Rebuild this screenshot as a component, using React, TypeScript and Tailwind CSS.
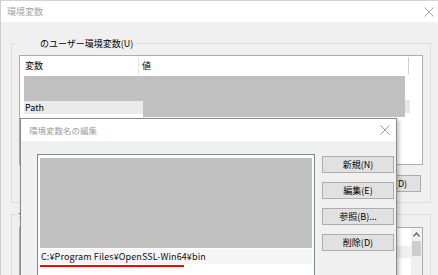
import React from "react";

const CloseX = ({ color = "#9a9a9a" }: { color?: string }) => (
  <svg width="10" height="10" viewBox="0 0 10 10" className="block">
    <path d="M0.5 0.5 L9.5 9.5 M9.5 0.5 L0.5 9.5" stroke={color} strokeWidth="1" fill="none" />
  </svg>
);

const Btn = ({ label, className = "" }: { label: string; className?: string }) => (
  <div
    className={`w-[72px] h-[17px] bg-[#e1e1e1] border border-[#adadad] flex items-center justify-center text-[9px] leading-none text-black ${className}`}
  >
    {label}
  </div>
);

const App = () => {
  return (
    <div className="relative w-[438px] h-[275px] overflow-hidden bg-[#f0f0f0] border-l border-[#cdcdcd] font-['Noto_Sans_CJK_JP',sans-serif] text-[9px] text-black">
      {/* 環境変数 (background window) */}
      <div className="flex flex-col">
        <div className="h-[22px] bg-white border-t border-[#d4d4d4] flex items-center justify-between pl-[6px] pr-[4px] text-[#a3a3a3]">
          <span className="text-[9px]">環境変数</span>
          <CloseX color="#a8a8a8" />
        </div>

        {/* user variables group */}
        <div className="relative ml-[10px] mt-[21px] w-[420px] h-[160px] border border-[#dcdcdc]">
          <div className="absolute left-[5px] top-[-7px] h-[13px] pl-[23px] pr-[3px] bg-[#f0f0f0] flex items-center text-[9px] leading-none">
            のユーザー環境変数(U)
          </div>

          <div className="ml-[7px] mt-[11px] w-[404px] h-[110px] bg-white border border-[#adadad] relative overflow-hidden">
            <div className="flex h-[19px] items-center">
              <div className="w-[119px] h-full pl-[5px] flex items-center border-r border-[#e5e5e5]">変数</div>
              <div className="pl-[3px]">値</div>
            </div>
            <div className="ml-[4px] mt-[1px] w-[381px] h-[25px] bg-[#c0c0c0]" />
            <div className="ml-[4px] flex h-[13px]">
              <div className="w-[119px] h-[13px] bg-[#ebebeb] pl-[1px] flex items-center text-[9px] leading-none">Path</div>
              <div className="relative z-[1] w-[262px] h-[16px] bg-[#c0c0c0]" />
            </div>
            {/* thin scrollbar */}
            <div className="absolute left-[388px] top-[1px] w-[1px] h-[17px] bg-[#cfcfcf]" />
            <div className="absolute left-[385px] top-[44px] w-[5px] h-[13px] bg-[#e6e6e6]" />
          </div>

          <div className="flex justify-end pr-[9px] mt-[10px]">
            <Btn label="削除(D)" className="pl-[14px]" />
          </div>
        </div>

        {/* system variables group */}
        <div className="relative ml-[10px] mt-[11px] w-[420px] h-[80px] border border-[#dcdcdc]">
          <div className="absolute left-[5px] top-[-7px] h-[13px] px-[1px] bg-[#f0f0f0] flex items-center text-[9px] leading-none">
            システム環境変数(S)
          </div>
          <div className="ml-[7px] mt-[12px] w-[404px] h-[70px] bg-white border border-[#adadad] flex">
            <div className="flex-1 pt-[18px]">
              <div className="h-[12px] bg-[#f0f0f0]" />
            </div>
            <div className="w-[11px] bg-[#f0f0f0] flex flex-col items-center pt-[4px]">
              <svg width="7" height="5" viewBox="0 0 7 5" className="block">
                <path d="M0.5 4.5 L3.5 1 L6.5 4.5" stroke="#606060" strokeWidth="1.2" fill="none" />
              </svg>
              <div className="mt-[4px] w-[9px] h-[15px] bg-[#cdcdcd]" />
            </div>
          </div>
        </div>
      </div>

      {/* 環境変数名の編集 (front dialog) */}
      <div className="absolute left-[19px] top-[118px] w-[377px] h-[175px] border border-[#8a8a8a] bg-[#f0f0f0] shadow-[2px_2px_4px_rgba(0,0,0,0.25)] flex flex-col">
        <div className="h-[22px] bg-white flex items-center justify-between pl-[8px] pr-[6px] text-[#a0a0a0] shrink-0">
          <span className="text-[8.5px]">環境変数名の編集</span>
          <CloseX color="#a0a0a0" />
        </div>
        <div className="flex pl-[16px] pt-[13px]">
          <div className="w-[278px] h-[140px] bg-white border border-[#828790] pl-[2px] pr-[2px] pt-[3px] flex flex-col">
            <div className="w-[272px] h-[90px] bg-[#c0c0c0]" />
            <div className="mt-[1px] w-[272px] h-[15px] bg-[#f5f5f5] pl-[1px] flex items-center text-[9px] leading-none text-[#111] tracking-[0.12px]">
              C:¥Program Files¥OpenSSL-Win64¥bin
            </div>
            <div className="mt-[1px] w-[144px] h-[2px] bg-[#ff0000]" />
          </div>
          <div className="ml-[7px] mt-[2px] flex flex-col gap-[9px]">
            <Btn label="新規(N)" />
            <Btn label="編集(E)" />
            <Btn label="参照(B)..." />
            <Btn label="削除(D)" />
          </div>
        </div>
      </div>
    </div>
  );
};

export default App;
